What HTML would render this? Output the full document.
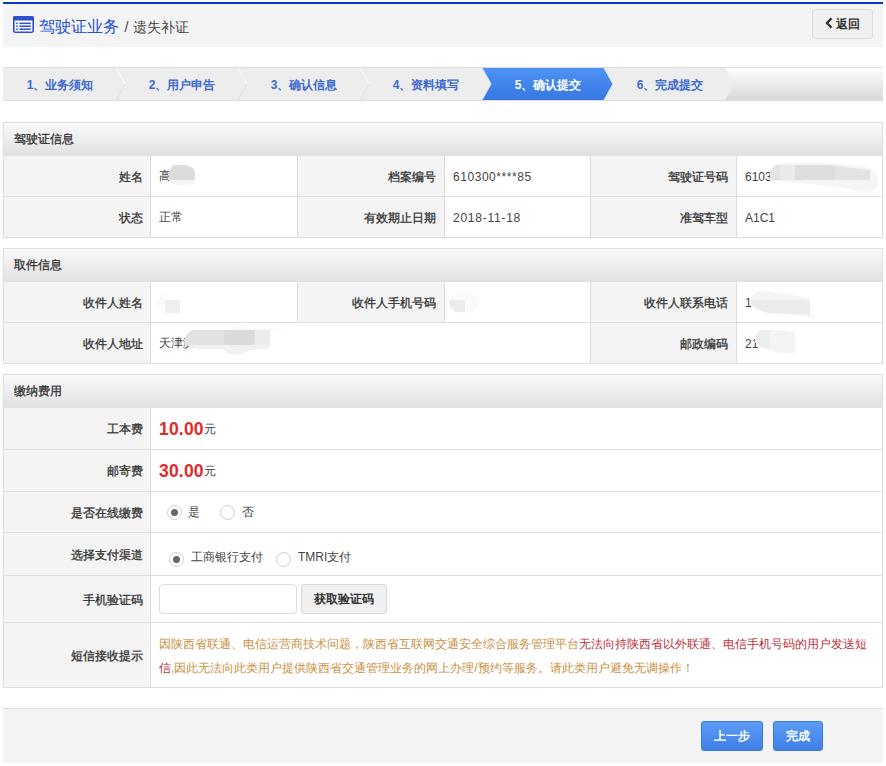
<!DOCTYPE html>
<html><head><meta charset="utf-8">
<style>
*{box-sizing:border-box;}
html,body{margin:0;padding:0;background:#fff;width:886px;height:766px;overflow:hidden;}
body{font-family:"Liberation Sans",sans-serif;font-size:12px;color:#333;position:relative;}
.hdr{position:absolute;left:3px;top:2px;width:880px;height:45px;background:#f4f4f4;border-top:2px solid #003cc6;}
.hdr .ico{position:absolute;left:10px;top:12px;}
.hdr .t1{position:absolute;left:36px;top:12.5px;font-size:16.3px;color:#2350d6;white-space:nowrap;line-height:18px;}
.hdr .t2{font-size:14.2px;color:#444;}
.back{position:absolute;left:809px;top:5px;width:61px;height:30px;border:1px solid #ddd;border-radius:3px;background:#f0f0f0;font-weight:bold;font-size:12px;color:#333;line-height:28px;}
.back svg{position:absolute;left:12px;top:7px;}
.back span{position:absolute;left:23px;top:0;}
.steps{position:absolute;left:3px;top:67px;width:880px;height:34px;border-top:1px solid #ddd;border-bottom:1px solid #ddd;overflow:hidden;}
.steps svg{position:absolute;left:0;top:0;}
.step{position:absolute;top:0;height:32px;line-height:34px;font-weight:bold;color:#3d6ad0;font-size:12px;text-align:center;white-space:nowrap;}
.panel{position:absolute;left:3px;width:880px;border:1px solid #ddd;background:#fff;}
.ph{height:33px;background:linear-gradient(#fafafa,#e0e0e0);font-weight:normal;-webkit-text-stroke:0.3px #333;line-height:33px;padding-left:10px;color:#333;}
.row{position:relative;border-top:1px solid #ddd;}
.row.first{border-top:none;}
.c{position:absolute;top:0;bottom:0;display:flex;align-items:center;white-space:nowrap;}
.l{background:#f4f4f4;justify-content:flex-end;padding-right:7px;font-weight:normal;-webkit-text-stroke:0.3px #333;color:#333;padding-top:2px;}
.v{background:#fff;padding-left:8px;color:#444;border-left:1px solid #ddd;padding-top:1px;}
.l.b{border-left:1px solid #ddd;padding-right:8px;}
.blob{position:absolute;border-radius:50%;}
.foot{position:absolute;left:3px;top:708px;width:880px;height:55px;background:#f4f4f4;border-top:1px solid #ddd;}
.btn{position:absolute;top:12px;height:30px;border:1px solid #3a78dd;border-radius:3px;background:linear-gradient(#5c9cf5,#3f7fe6);color:#fff;font-weight:bold;text-align:center;line-height:28px;}
.money{color:#e02b2b;font-weight:bold;font-size:17.5px;letter-spacing:0.2px;}
.radio{position:absolute;width:15px;height:15px;border:1px solid #d0d0d0;border-radius:50%;background:#fff;}
.radio.on:after{content:"";position:absolute;left:3px;top:3px;width:7px;height:7px;border-radius:50%;background:#666;}
.tx{position:absolute;line-height:16px;white-space:nowrap;}
.inp{position:absolute;left:8px;top:8px;width:138px;height:30px;border:1px solid #dcdcdc;border-radius:4px;background:#fff;}
.gbtn{position:absolute;left:150px;top:8px;width:86px;height:30px;border:1px solid #d9d9d9;border-radius:3px;background:#f0f0f0;font-weight:bold;color:#333;text-align:center;line-height:28px;font-size:12px;}
.notice{position:absolute;left:8px;top:9px;width:716px;line-height:24px;color:#c9913f;white-space:normal;}
.notice .r{color:#c0303c;}
</style></head><body>

<div class="hdr">
  <svg class="ico" width="21" height="17" viewBox="0 0 21 17">
    <path d="M2.2,0.8 H18.8 A1.4,1.4 0 0 1 20.2,2.2 V14.8 A1.4,1.4 0 0 1 18.8,16.2 H2.2 A1.4,1.4 0 0 1 0.8,14.8 V2.2 A1.4,1.4 0 0 1 2.2,0.8 Z" fill="#fff" stroke="#2d4fd0" stroke-width="1.6"/>
    <path d="M2.2,0 H18.8 A2.2,2.2 0 0 1 21,2.2 V4.4 H0 V2.2 A2.2,2.2 0 0 1 2.2,0 Z" fill="#2d4fd0"/>
    <rect x="3.2" y="6.6" width="1.6" height="1.5" fill="#2d4fd0"/><rect x="6.4" y="6.6" width="11.4" height="1.5" fill="#2d4fd0"/>
    <rect x="3.2" y="9.5" width="1.6" height="1.5" fill="#2d4fd0"/><rect x="6.4" y="9.5" width="11.4" height="1.5" fill="#2d4fd0"/>
    <rect x="3.2" y="12.4" width="1.6" height="1.5" fill="#2d4fd0"/><rect x="6.4" y="12.4" width="11.4" height="1.5" fill="#2d4fd0"/>
  </svg>
  <div class="t1">驾驶证业务 <span class="t2" style="margin-left:1px">/&nbsp;</span><span class="t2" style="margin-left:1px">遗失补证</span></div>
  <div class="back"><svg width="9" height="12" viewBox="0 0 9 12"><polyline points="6.5,1.2 2,6 6.5,10.8" fill="none" stroke="#333" stroke-width="2.4"/></svg><span>返回</span></div>
</div>

<div class="steps">
  <svg width="880" height="32" viewBox="0 0 880 32">
    <defs>
      <linearGradient id="ga" x1="0" y1="0" x2="0" y2="1"><stop offset="0" stop-color="#fdfdfd"/><stop offset="1" stop-color="#d9d9d9"/></linearGradient>
      <linearGradient id="gb" x1="0" y1="0" x2="0" y2="1"><stop offset="0" stop-color="#4e93f4"/><stop offset="1" stop-color="#3877e2"/></linearGradient>
    </defs>
    <rect x="0" y="0" width="880" height="32" fill="#ededed"/>
    <polygon points="722,0 880,0 880,32 722,32 731,16" fill="url(#ga)"/>
    <g stroke-width="1.2" fill="none">
      <polyline points="113,0 122,16" stroke="#fafafa"/><polyline points="122,16 113,32" stroke="#e4e4e4"/>
      <polyline points="235,0 244,16" stroke="#fafafa"/><polyline points="244,16 235,32" stroke="#e4e4e4"/>
      <polyline points="357,0 366,16" stroke="#fafafa"/><polyline points="366,16 357,32" stroke="#e4e4e4"/>
    </g>
    <polygon points="479.5,0 601,0 610,16 601,32 479.5,32 488.5,16" fill="url(#gb)"/>
    <polyline points="601,0 610,16 601,32" stroke="#e8eefa" stroke-width="1" fill="none"/>
  </svg>
  <div class="step" style="left:0;width:114px;">1、业务须知</div>
  <div class="step" style="left:122px;width:114px;">2、用户申告</div>
  <div class="step" style="left:244px;width:114px;">3、确认信息</div>
  <div class="step" style="left:366px;width:114px;">4、资料填写</div>
  <div class="step" style="left:488px;width:114px;color:#fff;">5、确认提交</div>
  <div class="step" style="left:610px;width:114px;">6、完成提交</div>
</div>

<!-- panel 1 -->
<div class="panel" style="top:122px;height:116px;">
  <div class="ph">驾驶证信息</div>
  <div class="row first" style="height:40px;">
    <div class="c l" style="left:0;width:146px;">姓名</div>
    <div class="c v" style="left:146px;width:147px;">高</div>
    <div class="c l b" style="left:293px;width:147px;">档案编号</div>
    <div class="c v" style="left:440px;width:146px;"><span style="letter-spacing:0.55px">610300****85</span></div>
    <div class="c l b" style="left:586px;width:146px;">驾驶证号码</div>
    <div class="c v" style="left:732px;width:146px;">6103</div>
  </div>
  <div class="row" style="height:41px;">
    <div class="c l" style="left:0;width:146px;">状态</div>
    <div class="c v" style="left:146px;width:147px;">正常</div>
    <div class="c l b" style="left:293px;width:147px;">有效期止日期</div>
    <div class="c v" style="left:440px;width:146px;"><span style="letter-spacing:0.75px">2018-11-18</span></div>
    <div class="c l b" style="left:586px;width:146px;">准驾车型</div>
    <div class="c v" style="left:732px;width:146px;">A1C1</div>
  </div>
</div>

<!-- panel 2 -->
<div class="panel" style="top:248px;height:116px;">
  <div class="ph">取件信息</div>
  <div class="row first" style="height:40px;">
    <div class="c l" style="left:0;width:146px;">收件人姓名</div>
    <div class="c v" style="left:146px;width:147px;"></div>
    <div class="c l b" style="left:293px;width:147px;">收件人手机号码</div>
    <div class="c v" style="left:440px;width:146px;"></div>
    <div class="c l b" style="left:586px;width:146px;">收件人联系电话</div>
    <div class="c v" style="left:732px;width:146px;">1</div>
  </div>
  <div class="row" style="height:41px;">
    <div class="c l" style="left:0;width:146px;">收件人地址</div>
    <div class="c v" style="left:146px;width:440px;">天津滨</div>
    <div class="c l b" style="left:586px;width:146px;">邮政编码</div>
    <div class="c v" style="left:732px;width:146px;">21</div>
  </div>
</div>

<!-- panel 3 -->
<div class="panel" style="top:374px;height:314px;">
  <div class="ph">缴纳费用</div>
  <div class="row first" style="height:41px;">
    <div class="c l" style="left:0;width:146px;">工本费</div>
    <div class="c v" style="left:146px;width:732px;"><span class="money">10.00</span>元</div>
  </div>
  <div class="row" style="height:42px;">
    <div class="c l" style="left:0;width:146px;">邮寄费</div>
    <div class="c v" style="left:146px;width:732px;"><span class="money">30.00</span>元</div>
  </div>
  <div class="row" style="height:41px;">
    <div class="c l" style="left:0;width:146px;">是否在线缴费</div>
    <div class="c v" style="left:146px;width:732px;"><span class="radio on" style="left:16px;top:13px;"></span><span class="tx" style="left:37px;top:12px;">是</span><span class="radio" style="left:69px;top:13px;"></span><span class="tx" style="left:91px;top:12px;">否</span></div>
  </div>
  <div class="row" style="height:43px;">
    <div class="c l" style="left:0;width:146px;">选择支付渠道</div>
    <div class="c v" style="left:146px;width:732px;"><span class="radio on" style="left:18px;top:19px;"></span><span class="tx" style="left:40px;top:16px;">工商银行支付</span><span class="radio" style="left:125px;top:19px;"></span><span class="tx" style="left:147px;top:16px;">TMRI支付</span></div>
  </div>
  <div class="row" style="height:47px;">
    <div class="c l" style="left:0;width:146px;">手机验证码</div>
    <div class="c v" style="left:146px;width:732px;"><div class="inp"></div><div class="gbtn">获取验证码</div></div>
  </div>
  <div class="row" style="height:65px;">
    <div class="c l" style="left:0;width:146px;">短信接收提示</div>
    <div class="c v" style="left:146px;width:732px;"><div class="notice">因陕西省联通、电信运营商技术问题，陕西省互联网交通安全综合服务管理平台<span class="r">无法向持陕西省以外联通、电信手机号码的用户发送短信</span>,因此无法向此类用户提供陕西省交通管理业务的网上办理/预约等服务。请此类用户避免无调操作！</div></div>
  </div>
</div>


<svg style="position:absolute;left:0;top:0;" width="886" height="766" viewBox="0 0 886 766">
<!-- name -->
<path d="M173,165 H186 L193,168 L195,172 V180 L193,184 L186,185 H175 L171,183 L169,180 V171 Z" fill="#f4f4f4"/>
<path d="M173,165 H186 L193,168 L195,172 V180 H169 V171 Z" fill="#dcdcdc"/>
<!-- licence no -->
<path d="M778,163 H828 L868,167 L878,176 V187 L870,192 L830,186 L790,182 L776,181 L770,179 V170 Z" fill="#f5f5f5"/>
<path d="M776,165 H826 L870,170 V180 H770 V171 Z" fill="#e3e3e3"/>
<rect x="780" y="165" width="15" height="15" fill="#eaeaea"/>
<path d="M795,165 H826 L835,166 V180 H795 Z" fill="#dedede"/>
<!-- recipient name -->
<path d="M163,293 H165 V311 H163 L157,305 V299 Z" fill="#fafafa"/>
<rect x="165" y="300" width="15" height="13" fill="#efefef"/>
<!-- mobile -->
<ellipse cx="464" cy="302.5" rx="15" ry="10.5" fill="#fafafa"/>
<path d="M449,300 H465 V312 H455 L450,307 Z" fill="#ebebeb"/>
<!-- contact tel -->
<path d="M756,292 L768,291 L810,298 V314 L820,318 L790,314 L768,313 L756,309 L751,303 V296 Z" fill="#f5f5f5"/>
<path d="M751,300 H810 V314 L790,314 L768,313 L756,309 L751,304 Z" fill="#ebebeb"/>
<!-- address -->
<path d="M230,327 L290,329 L270,331 H230 Z" fill="#fafafa"/>
<path d="M192,330 H270 V349 L250,350 L240,355 L230,354 L222,349 H196 L188,346 L186,340 V335 Z" fill="#f1f1f1"/>
<path d="M192,330 H270 V345 H186 V335 Z" fill="#e2e2e2"/>
<rect x="224" y="330" width="30" height="15" fill="#dadada"/>
<rect x="255" y="330" width="15" height="15" fill="#ececec"/>
<!-- postcode -->
<path d="M760,330 H780 L795,332 V353 H780 L762,348 L755,342 V336 Z" fill="#f4f4f4"/>
<path d="M760,330 H770 V348 L762,348 L755,342 V336 Z" fill="#eeeeee"/>
</svg>
<div class="foot">
  <div class="btn" style="left:698px;width:62px;">上一步</div>
  <div class="btn" style="left:770px;width:50px;">完成</div>
</div>
</body></html>
